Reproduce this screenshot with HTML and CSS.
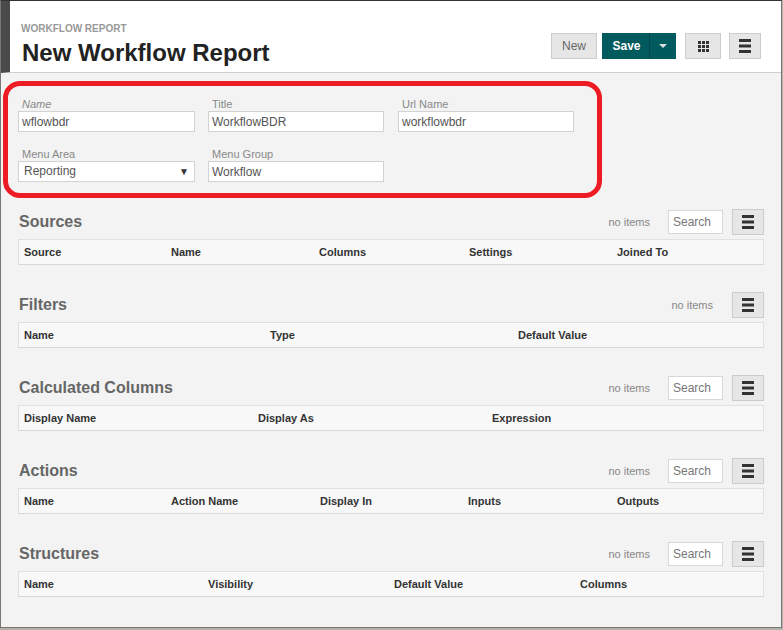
FILE: index.html
```html
<!DOCTYPE html>
<html lang="en">
<head>
    <meta charset="UTF-8">
    <meta name="viewport" content="width=device-width, initial-scale=1.0">
    <title>New Workflow Report</title>
    <link rel="stylesheet" href="styles.css">
</head>
<body>
    <div class="window">
        <header class="page-header">
            <div class="heading">
                <div class="eyebrow">WORKFLOW REPORT</div>
                <h1>New Workflow Report</h1>
            </div>
            <div class="actions">
                <button class="btn btn-new">New</button>
                <div class="save-group">
                    <button class="btn-save">Save</button>
                    <button class="btn-caret"><span class="caret"></span></button>
                </div>
                <button class="btn btn-icon btn-grid">
                    <svg width="11" height="11" viewBox="0 0 11 11" fill="#333"><path d="M0 0h3v3H0zM4 0h3v3H4zM8 0h3v3H8zM0 4h3v3H0zM4 4h3v3H4zM8 4h3v3H8zM0 8h3v3H0zM4 8h3v3H4zM8 8h3v3H8z"/></svg>
                </button>
                <button class="btn btn-icon btn-menu">
                    <svg width="12" height="14" viewBox="0 0 12 14" fill="#333"><path d="M0 0h12v3H0zM0 5.500h12v3H0zM0 11h12v3H0z"/></svg>
                </button>
            </div>
        </header>

        <main class="content">
            <div class="form-grid">
                <div class="field">
                    <label class="required">Name</label>
                    <input type="text" value="wflowbdr">
                </div>
                <div class="field">
                    <label>Title</label>
                    <input type="text" value="WorkflowBDR">
                </div>
                <div class="field field-url">
                    <label>Url Name</label>
                    <input type="text" value="workflowbdr">
                </div>
                <div class="field">
                    <label>Menu Area</label>
                    <div class="select-box">Reporting<span class="select-arrow">▼</span></div>
                </div>
                <div class="field">
                    <label>Menu Group</label>
                    <input type="text" value="Workflow">
                </div>
            </div>

            <section class="panel">
                <div class="panel-head">
                    <h2>Sources</h2>
                    <span class="count">no items</span>
                    <input class="search" type="text" placeholder="Search">
                    <button class="btn btn-icon panel-menu">
                        <svg width="12" height="14" viewBox="0 0 12 14" fill="#333"><path d="M0 0h12v3H0zM0 5.500h12v3H0zM0 11h12v3H0z"/></svg>
                    </button>
                </div>
                <div class="table-head cols-sources">
                    <span>Source</span><span>Name</span><span>Columns</span><span>Settings</span><span>Joined To</span>
                </div>
            </section>

            <section class="panel">
                <div class="panel-head">
                    <h2>Filters</h2>
                    <span class="count">no items</span>
                    <button class="btn btn-icon panel-menu">
                        <svg width="12" height="14" viewBox="0 0 12 14" fill="#333"><path d="M0 0h12v3H0zM0 5.500h12v3H0zM0 11h12v3H0z"/></svg>
                    </button>
                </div>
                <div class="table-head cols-filters">
                    <span>Name</span><span>Type</span><span>Default Value</span>
                </div>
            </section>

            <section class="panel">
                <div class="panel-head">
                    <h2>Calculated Columns</h2>
                    <span class="count">no items</span>
                    <input class="search" type="text" placeholder="Search">
                    <button class="btn btn-icon panel-menu">
                        <svg width="12" height="14" viewBox="0 0 12 14" fill="#333"><path d="M0 0h12v3H0zM0 5.500h12v3H0zM0 11h12v3H0z"/></svg>
                    </button>
                </div>
                <div class="table-head cols-calc">
                    <span>Display Name</span><span>Display As</span><span>Expression</span>
                </div>
            </section>

            <section class="panel">
                <div class="panel-head">
                    <h2>Actions</h2>
                    <span class="count">no items</span>
                    <input class="search" type="text" placeholder="Search">
                    <button class="btn btn-icon panel-menu">
                        <svg width="12" height="14" viewBox="0 0 12 14" fill="#333"><path d="M0 0h12v3H0zM0 5.500h12v3H0zM0 11h12v3H0z"/></svg>
                    </button>
                </div>
                <div class="table-head cols-actions">
                    <span>Name</span><span>Action Name</span><span>Display In</span><span>Inputs</span><span>Outputs</span>
                </div>
            </section>

            <section class="panel">
                <div class="panel-head">
                    <h2>Structures</h2>
                    <span class="count">no items</span>
                    <input class="search" type="text" placeholder="Search">
                    <button class="btn btn-icon panel-menu">
                        <svg width="12" height="14" viewBox="0 0 12 14" fill="#333"><path d="M0 0h12v3H0zM0 5.500h12v3H0zM0 11h12v3H0z"/></svg>
                    </button>
                </div>
                <div class="table-head cols-structures">
                    <span>Name</span><span>Visibility</span><span>Default Value</span><span>Columns</span>
                </div>
            </section>

            <!-- red annotation drawn over the form -->
            <div class="annotation"></div>
        </main>
    </div>
</body>
</html>
```

FILE: styles.css
```css
body {
    font-family: "Liberation Sans", Arial, sans-serif;
    margin: 0;
    padding: 0;
    background-color: #b4b1ab;
}

.window {
    width: 780px;
    height: 626px;
    border: 1px solid #777;
    border-top-color: #333;
    display: flex;
    flex-direction: column;
    background-color: #f3f3f3;
    position: relative;
}

.page-header {
    box-sizing: border-box;
    height: 72px;
    flex: none;
    display: flex;
    justify-content: space-between;
    background-color: #fff;
    border-left: 9px solid #4a4a4a;
    border-bottom: 1px solid #d0d0d0;
    position: relative;
}

.heading {
    padding: 22px 0 0 11px;
}

.eyebrow {
    font-size: 10px;
    line-height: 12px;
    font-weight: bold;
    color: #999;
}

h1 {
    margin: 3px 0 0 1px;
    font-size: 24px;
    line-height: 30px;
    font-weight: bold;
    color: #222;
}

.actions {
    display: flex;
    align-items: flex-start;
    padding: 32px 20px 0 0;
}

.btn {
    box-sizing: border-box;
    height: 26px;
    background-color: #e6e6e6;
    border: 1px solid #ccc;
    padding: 0;
    color: #666;
    font-family: inherit;
    font-size: 12px;
    display: flex;
    align-items: center;
    justify-content: center;
}

.btn-new {
    width: 46px;
}

.save-group {
    display: flex;
    height: 26px;
    margin-left: 5px;
    background-color: #005a5e;
}

.btn-save {
    width: 48px;
    border: none;
    border-right: 1px solid #004a4e;
    background: none;
    padding: 0 0 0 2px;
    color: #fff;
    font-family: inherit;
    font-size: 12px;
    font-weight: bold;
}

.btn-caret {
    width: 26px;
    border: none;
    background: none;
    padding: 0;
    display: flex;
    align-items: center;
    justify-content: center;
}

.caret {
    border-top: 4px solid #ddd;
    border-left: 4px solid transparent;
    border-right: 4px solid transparent;
}

.btn-grid {
    width: 36px;
    margin-left: 9px;
}

.btn-menu {
    width: 32px;
    margin-left: 8px;
}

.content {
    flex: 1;
    padding: 24px 17px 0 17px;
    position: relative;
}

.form-grid {
    display: grid;
    grid-template-columns: 177px 176px 176px;
    column-gap: 13px;
    row-gap: 15px;
    justify-content: start;
    height: 112px;
    align-content: start;
}

.field-url {
    margin: 0 -1px 0 1px;
}

.field label {
    display: block;
    font-size: 11px;
    line-height: 14px;
    margin: 0 0 0 4px;
    color: #888;
}

.field label.required {
    font-style: italic;
}

.field input,
.select-box {
    box-sizing: border-box;
    display: block;
    width: 100%;
    height: 21px;
    margin: 0;
    padding: 0 3px;
    border: 1px solid #d2d2d2;
    border-radius: 0;
    background-color: #fff;
    font-family: inherit;
    font-size: 12px;
    line-height: 19px;
    color: #555;
    outline: none;
}

.select-box {
    padding-left: 5px;
    display: flex;
    justify-content: space-between;
}

.select-arrow {
    font-size: 10px;
    color: #333;
    margin-right: 2px;
}

.panel {
    height: 83px;
}

.panel-head {
    display: flex;
    align-items: center;
    height: 26px;
}

.panel-head h2 {
    flex: 1;
    margin: 0 0 0 1px;
    font-size: 16px;
    font-weight: bold;
    color: #666;
}

.count {
    font-size: 11px;
    color: #888;
}

.search {
    box-sizing: border-box;
    width: 55px;
    height: 24px;
    margin-left: 18px;
    padding: 0 4px;
    border: 1px solid #d8d8d8;
    background-color: #fff;
    font-family: inherit;
    font-size: 12px;
    color: #666;
    outline: none;
}

.search::placeholder {
    color: #777;
    opacity: 1;
}

.panel-menu {
    width: 32px;
    margin-left: 9px;
}

.count:nth-last-child(2) {
    margin-right: 10px;
}

.table-head {
    box-sizing: border-box;
    display: grid;
    height: 26px;
    margin-top: 4px;
    padding: 0 5px;
    align-items: center;
    background-color: #f8f8f8;
    border: 1px solid #e0e0e0;
    border-bottom-color: #d8d8d8;
    font-size: 11px;
    font-weight: bold;
    color: #333;
}

.cols-sources {
    grid-template-columns: 147px 148px 150px 148px 1fr;
}

.cols-actions {
    grid-template-columns: 147px 149px 148px 149px 1fr;
}

.cols-structures {
    grid-template-columns: 184px 186px 186px 1fr;
}

.cols-filters {
    grid-template-columns: 246px 248px 1fr;
}

.cols-calc {
    grid-template-columns: 234px 234px 1fr;
}

.annotation {
    position: absolute;
    left: 2px;
    top: 8px;
    width: 589px;
    height: 107px;
    border: 5px solid #ed1c24;
    border-radius: 17px;
}
```
